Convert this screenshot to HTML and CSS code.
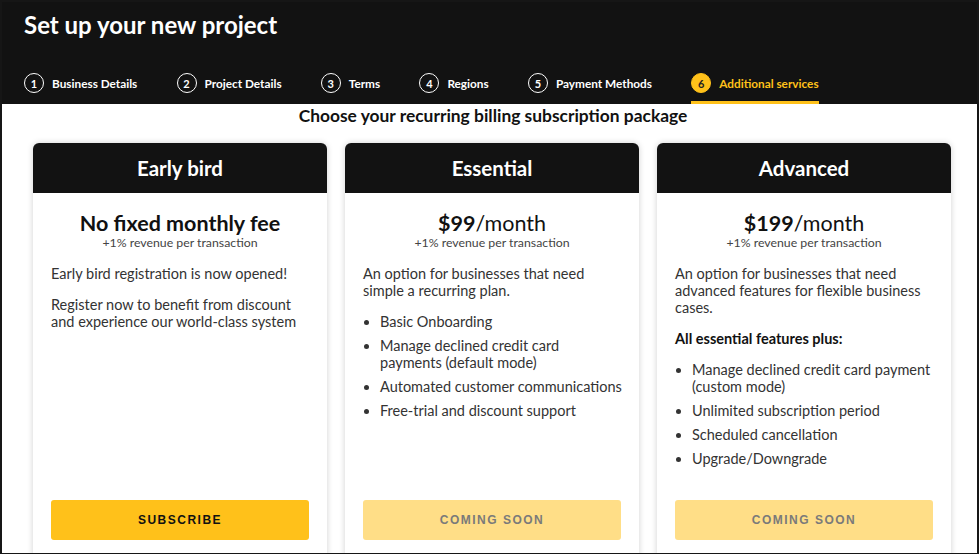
FILE: index.html
```html
<!doctype html>
<html lang="en">
  <head>
    <meta charset="UTF-8" />
    <meta name="viewport" content="width=device-width, initial-scale=1.0" />
    <title>Set up your new project</title>
    <link rel="stylesheet" href="styles.css">
  </head>
  <body>
    <div class="frame">
      <header class="top">
        <h1>Set up your new project</h1>
        <nav class="steps">
          <div class="step"><span class="num">1</span>Business Details</div>
          <div class="step"><span class="num">2</span>Project Details</div>
          <div class="step"><span class="num">3</span>Terms</div>
          <div class="step"><span class="num">4</span>Regions</div>
          <div class="step"><span class="num">5</span>Payment Methods</div>
          <div class="step active"><span class="num">6</span>Additional services</div>
        </nav>
      </header>

      <main class="content">
        <h2>Choose your recurring billing subscription package</h2>
        <div class="plans">
          <section class="plan">
            <div class="plan-head">Early bird</div>
            <div class="plan-body">
              <div class="price"><b>No fixed monthly fee</b></div>
              <div class="fee">+1% revenue per transaction</div>
              <p>Early bird registration is now opened!</p>
              <p>Register now to benefit from discount and experience our world-class system</p>
              <button class="btn">Subscribe</button>
            </div>
          </section>

          <section class="plan">
            <div class="plan-head">Essential</div>
            <div class="plan-body">
              <div class="price"><b>$99</b>/month</div>
              <div class="fee">+1% revenue per transaction</div>
              <p>An option for businesses that need simple a recurring plan.</p>
              <ul>
                <li>Basic Onboarding</li>
                <li>Manage declined credit card payments (default mode)</li>
                <li>Automated customer communications</li>
                <li>Free-trial and discount support</li>
              </ul>
              <button class="btn soon">Coming soon</button>
            </div>
          </section>

          <section class="plan">
            <div class="plan-head">Advanced</div>
            <div class="plan-body">
              <div class="price"><b>$199</b>/month</div>
              <div class="fee">+1% revenue per transaction</div>
              <p>An option for businesses that need advanced features for flexible business cases.</p>
              <p class="plus">All essential features plus:</p>
              <ul>
                <li>Manage declined credit card payment (custom mode)</li>
                <li>Unlimited subscription period</li>
                <li>Scheduled cancellation</li>
                <li>Upgrade/Downgrade</li>
              </ul>
              <button class="btn soon">Coming soon</button>
            </div>
          </section>
        </div>
      </main>
    </div>
  </body>
</html>
```

FILE: styles.css
```css
body {
  margin: 0;
  font-family: Lato, "Open Sans", sans-serif;
  color: #222;
  background: #fff;
}
.frame {
  width: 975px;
  height: 551px;
  border: 2px solid #161616;
  overflow: hidden;
}
.top {
  background: #121212;
  color: #fff;
  height: 102px;
  padding: 0 0 0 22px;
  display: flex;
  flex-direction: column;
}
.top h1 {
  margin: 9px 0 0;
  font-size: 24px;
  font-weight: 700;
  line-height: 28px;
}
.steps {
  display: flex;
  margin-top: auto;
}
.step {
  display: flex;
  align-items: center;
  font-size: 11.8px;
  font-weight: 700;
  height: 22px;
  padding-bottom: 10px;
  margin-right: 39.2px;
}
.step .num {
  width: 18px;
  height: 18px;
  border: 1px solid #fff;
  border-radius: 50%;
  display: flex;
  align-items: center;
  justify-content: center;
  margin-right: 8px;
  font-size: 11px;
}
.step.active {
  color: #ffc11a;
  border-bottom: 3px solid #ffc11a;
  padding-bottom: 7px;
}
.step.active .num {
  background: #ffc11a;
  border-color: #ffc11a;
  color: #222;
}
.content {
  padding: 2px 24px 0 31px;
}
.content h2 {
  margin: 0 0 17px;
  text-align: center;
  font-size: 17.4px;
  font-weight: 700;
  line-height: 20px;
  color: #111;
}
.plans {
  display: grid;
  grid-template-columns: repeat(3, 294px);
  column-gap: 18px;
}
.plan {
  height: 414px;
  border-radius: 6px 6px 0 0;
  box-shadow: 0 0 6px rgba(0, 0, 0, 0.18);
  display: flex;
  flex-direction: column;
  background: #fff;
}
.plan-head {
  background: #121212;
  color: #fff;
  height: 50px;
  border-radius: 6px 6px 0 0;
  display: flex;
  align-items: center;
  justify-content: center;
  font-size: 20.5px;
  font-weight: 700;
}
.plan-body {
  flex: 1;
  display: flex;
  flex-direction: column;
  padding: 17px 18px;
  font-size: 14.5px;
  line-height: 17px;
  color: #333;
}
.price {
  text-align: center;
  font-size: 21.5px;
  line-height: 26px;
  color: #111;
}
.fee {
  text-align: center;
  font-size: 12.3px;
  line-height: 14px;
  color: #444;
  margin-bottom: 15px;
}
.plan-body p {
  margin: 0 0 14px;
}
.plan-body p.plus {
  font-weight: 700;
  color: #111;
  margin-bottom: 14px;
}
.plan-body ul {
  margin: 0 -3px 0 0;
  padding-left: 17px;
}
.plan-body li {
  margin-bottom: 7px;
}
.btn {
  margin-top: auto;
  height: 40px;
  border: none;
  border-radius: 3px;
  background: #ffc11a;
  color: #111;
  font-family: "Liberation Sans", Arial, sans-serif;
  font-size: 12px;
  font-weight: 700;
  letter-spacing: 1.5px;
  text-transform: uppercase;
}
.btn.soon {
  background: #ffde87;
  color: #7a7a7a;
}
```
